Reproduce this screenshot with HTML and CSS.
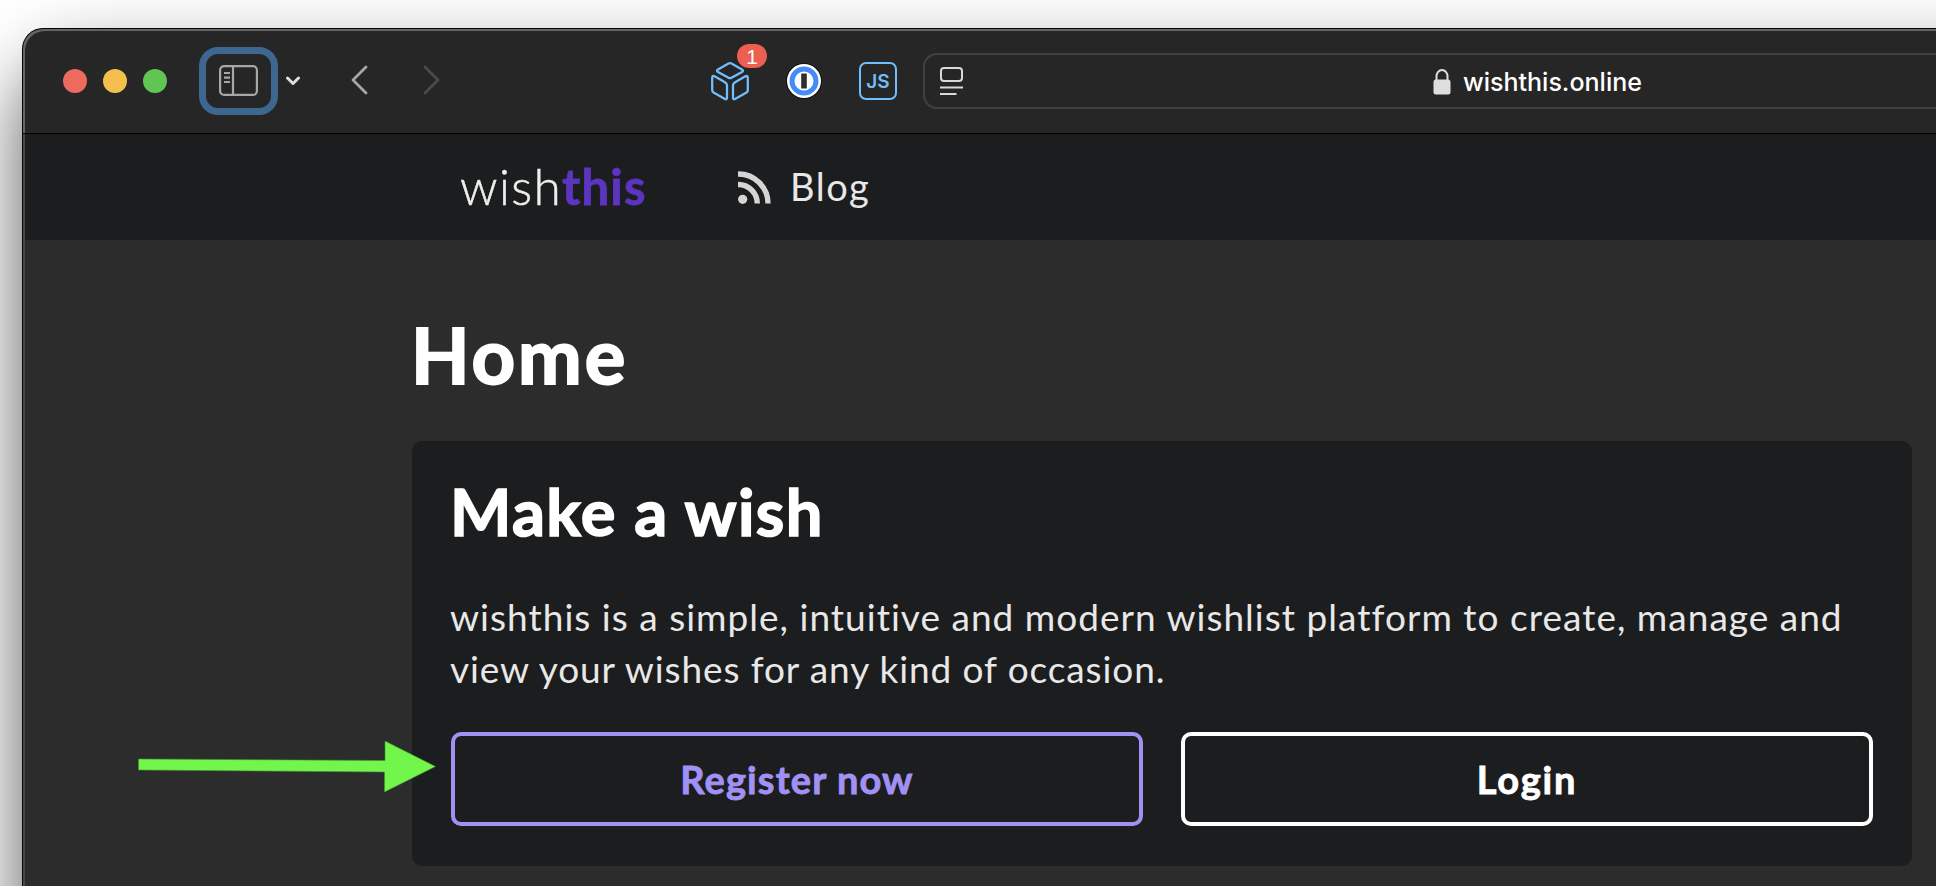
FILE: index.html
```html
<!DOCTYPE html>
<html lang="en">
<head>
<meta charset="utf-8">
<title>wishthis</title>
<link rel="stylesheet" href="styles.css">
</head>
<body>
<div class="window">
  <header class="toolbar">
    <div class="lights"><i class="light red"></i><i class="light yellow"></i><i class="light green"></i></div>
    <div class="sidebar-button">
      <svg width="39" height="31" viewBox="0 0 39 31" fill="none" stroke="#a7a7a7" stroke-width="2.200"><rect x="1.100" y="1.100" width="36.800" height="28.800" rx="4"/><path d="M14 1v29M5 8h6M5 12.700h6M5 17h6"/></svg>
    </div>
    <svg class="chevron" width="14" height="10" viewBox="0 0 14 10" fill="none" stroke="#dedede" stroke-width="3" stroke-linecap="round" stroke-linejoin="round"><path d="M1.500 2 7 7.500 12.500 2"/></svg>
    <svg class="back" width="17" height="30" viewBox="0 0 17 30" fill="none" stroke="#a7a7a7" stroke-width="2.800" stroke-linecap="round" stroke-linejoin="round"><path d="M15 2 2 15l13 13"/></svg>
    <svg class="forward" width="17" height="30" viewBox="0 0 17 30" fill="none" stroke="#4b4b4b" stroke-width="2.800" stroke-linecap="round" stroke-linejoin="round"><path d="m2 2 13 13L2 28"/></svg>
    <div class="cube">
      <svg width="38" height="40" viewBox="0 0 38 40" fill="none" stroke="#72bdfb" stroke-width="2.300" stroke-linejoin="round"><path d="M17.500 2.600Q19 1.800 20.500 2.600L31 8.500Q33 9.700 31 10.900L20.500 16.800Q19 17.600 17.500 16.800L7 10.900Q5 9.700 7 8.500ZM1.200 17Q1.200 14 4 15.500L14 21.200Q16 22.400 16 24.500V36.500Q16 39 14 38L2.500 31.500Q1.200 30.500 1.200 29ZM36.800 17Q36.800 14 34 15.500L24 21.200Q22 22.400 22 24.500V36.500Q22 39 24 38L35.500 31.500Q36.800 30.500 36.800 29Z"/></svg>
      <span class="badge">1</span>
    </div>
    <svg class="onepass" width="36" height="36" viewBox="0 0 36 36"><circle cx="18" cy="18" r="18" fill="#111"/><circle cx="18" cy="18" r="17" fill="#fff"/><circle cx="18" cy="18" r="12" fill="#fff" stroke="#468bf7" stroke-width="5"/><path d="M15.200 10.500h5.600v15h-5.600z" fill="#2e2e2e"/></svg>
    <div class="js">JS</div>
    <div class="address">
      <svg class="reader" width="23" height="28" viewBox="0 0 23 28" fill="none" stroke="#d9d9d9" stroke-width="2"><rect x="1" y="1" width="21" height="13" rx="3"/><path d="M0 20.500h23M0 27h16.500"/></svg>
      <svg class="lock" width="18" height="26" viewBox="0 0 18 26"><path d="M3.500 12V7.500a5.500 6.500 0 0 1 11 0V12" fill="none" stroke="#dedede" stroke-width="2"/><rect x=".5" y="10.500" width="17" height="15" rx="2.500" fill="#dedede"/></svg>
      <span class="url">wishthis.online</span>
    </div>
  </header>
  <nav class="nav">
    <div class="logo"><span class="wish">wish</span><b>this</b></div>
    <svg class="rss" width="33" height="33" viewBox="0 0 33 33" fill="none" stroke="#d5d5d5" stroke-width="5.400"><circle cx="4.700" cy="28.300" r="4.600" fill="#d5d5d5" stroke="none"/><path d="M0 13.500A19 19 0 0 1 19.300 32.500M0 3A29.500 29.500 0 0 1 30 32.500"/></svg>
    <span class="blog">Blog</span>
  </nav>
  <main class="page">
    <h1>Home</h1>
    <section class="card">
      <h2>Make a wish</h2>
      <p><span class="line1">wishthis is a simple, intuitive and modern wishlist platform to create, manage and</span><br><span class="line2">view your wishes for any kind of occasion.</span></p>
      <div class="actions"><a class="button register">Register now</a><a class="button login">Login</a></div>
    </section>
  </main>
</div>
<svg class="arrow" width="300" height="54" viewBox="0 0 300 54"><path d="M.500 18 247 19.500V0L297.500 25.500 246.500 51V31L.500 29Z" fill="#72f64c" stroke="#459133" stroke-width=".6"/></svg>
</body>
</html>
```
FILE: styles.css
```css
*{box-sizing:border-box}
body{margin:0;padding:28px 0 0 22px;height:886px;overflow:hidden;position:relative;background:#fff;font-family:Lato,"Open Sans",sans-serif;font-variant-ligatures:none;color:#e8e8e8}
.window{height:858px;border:1px solid #050505;border-width:1px 0 0 1px;border-radius:21px 0 0 0;background:#2c2c2c;overflow:hidden;box-shadow:40px 76px 76px 40px rgba(0,0,0,.65)}
.toolbar{height:105px;display:flex;align-items:center;background:#262626;border-bottom:1px solid #000;box-shadow:inset 2px 2px #656565;border-top-left-radius:20px;padding-left:40px}
.toolbar>*{flex:none}
.lights{display:flex;gap:16px}
.light{width:24px;height:24px;border-radius:50%}
.red{background:#ed6a5e}.yellow{background:#f5bf4f}.green{background:#61c554}
.sidebar-button{width:79px;height:68px;border:7px solid #3d678f;border-radius:19px;margin-left:32px;display:flex;align-items:center;justify-content:center}
.sidebar-button svg{margin-bottom:2px}
.chevron{margin-left:8px}
.back{margin:0 0 2px 51px}
.forward{margin:0 0 2px 55px}
.cube{position:relative;width:38px;height:40px;margin-left:271px}
.cube svg{display:block}
.badge{position:absolute;left:26px;top:-17px;width:30px;height:24px;border-radius:12px;background:#ed5f50;color:#fff;font:500 21px/25px "Liberation Sans",sans-serif;text-align:center}
.onepass{margin-left:37px}
.js{width:38px;height:38px;border:2px solid #72bdfb;border-radius:7px;margin-left:37px;color:#72bdfb;font:600 19px/36px Inter,sans-serif;text-align:center}
.toolbar .address{flex:1;height:56px;border:2px solid #404040;border-right:0;border-radius:14px 0 0 14px;margin-left:26px;display:flex;align-items:center;padding-left:15px}
.lock{margin:2px 0 0 470px}
.url{margin:2px 0 0 12px;color:#fff;font:500 25px/30px Inter,sans-serif}
.nav{height:106px;background:#1c1d1e;box-shadow:inset 2px 0 #494949;display:flex;align-items:center;padding-left:437px}
.logo{display:flex;font-size:49px;line-height:60px;width:186px;margin-bottom:3px}
.wish{font-weight:300;width:102px;letter-spacing:1.5px;color:#eee;-webkit-text-stroke:.5px #eee}
.logo b{color:#5b35bf;letter-spacing:1.2px;-webkit-text-stroke:.8px #5b35bf}
.rss{margin-left:92px}
.blog{font-size:38px;margin:0 0 2px 19px;letter-spacing:1.5px}
.page{height:646px;padding:70px 0 0 389px;box-shadow:inset 2px 0 #494949}
h1,h2,p{margin:0}
h1{font-size:76px;line-height:90px;color:#fff;letter-spacing:3px;margin-left:-1px;-webkit-text-stroke:2px #fff}
.card{width:1500px;height:425px;margin-top:41px;background:#1c1d1e;border-radius:10px;padding:32px 39px 39px}
h2{font-size:65px;line-height:76px;color:#fff;letter-spacing:1.4px;margin-left:-1px;-webkit-text-stroke:1.5px #fff}
p{font-size:37px;line-height:52px;margin:42px 0 0 -1px;white-space:nowrap}
.line1{letter-spacing:1.02px}
.line2{letter-spacing:.9px}
.actions{display:grid;grid-template-columns:692px 692px;gap:38px;margin-top:37px}
.button{height:94px;border:4px solid;border-radius:10px;text-align:center;font-weight:700;font-size:38px;line-height:86px;letter-spacing:1.1px;-webkit-text-stroke:.8px currentColor}
.register{color:#a291f5}.login{color:#fff;letter-spacing:1.8px}
.arrow{position:absolute;left:138px;top:741px}
```
